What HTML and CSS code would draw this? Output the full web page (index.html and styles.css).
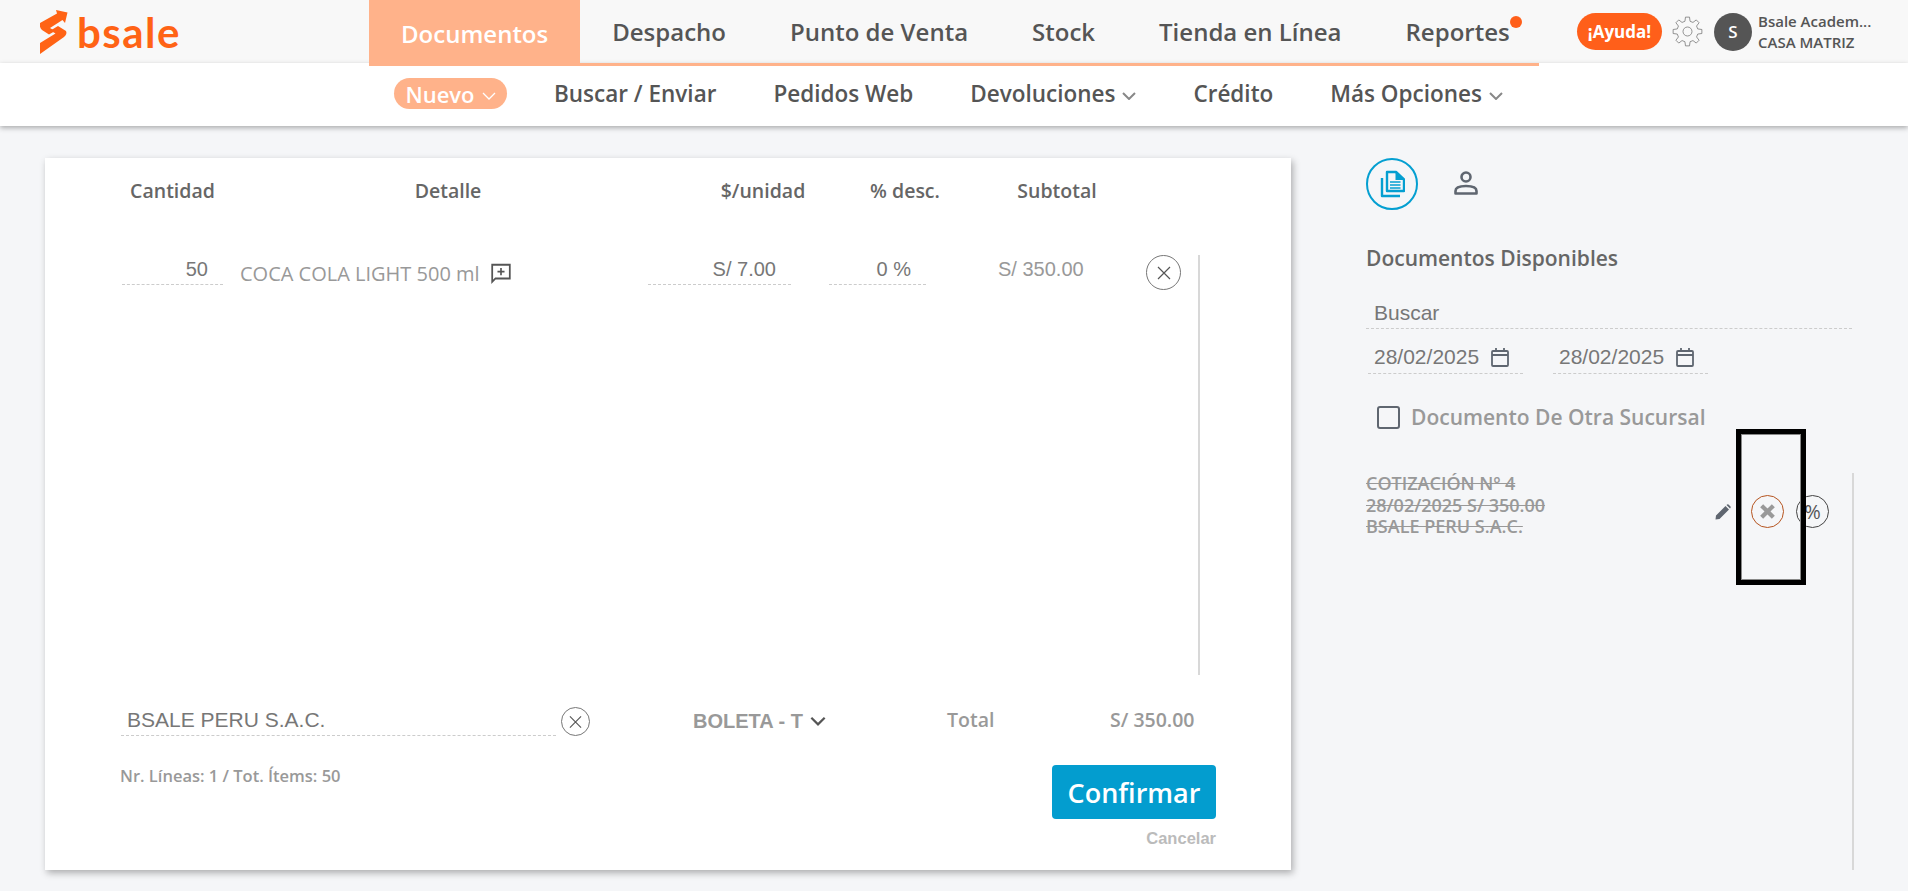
FILE: index.html
```html
<!DOCTYPE html>
<html lang="es">

<head>
    <meta charset="UTF-8">
    <title>Bsale - Documentos</title>
    <link rel="stylesheet" href="styles.css">
</head>

<body>
    <header class="topBar">
        <a class="logo" href="#">
            <svg class="logoMark" viewBox="0 0 28 44" width="28" height="44">
                <path fill="#ff6315" d="M0 13 L17 3.500 L16 0 L27.500 2.500 L25 13 L22.500 10 L10 18 L15 21 L9 24.500 L2 20 Q-1 17 0 13 Z"/>
                <path fill="#ff6315" d="M18 16 L26 21 Q27.500 24 24 27 L0 44 L0 33 L15.500 23.500 L10.500 20.500 Z"/>
            </svg>
            <span class="logoText">bsale</span>
        </a>
        <nav class="mainNav">
            <a class="mainOpt active" href="#">Documentos</a>
            <a class="mainOpt" href="#">Despacho</a>
            <a class="mainOpt" href="#">Punto de Venta</a>
            <a class="mainOpt" href="#">Stock</a>
            <a class="mainOpt" href="#">Tienda en Línea</a>
            <a class="mainOpt dotted" href="#">Reportes</a>
        </nav>
        <div class="tools">
            <button class="helpBtn">¡Ayuda!</button>
            <svg class="gear" viewBox="-12.500 -12.500 25 25" width="33" height="33">
                <polygon fill="none" stroke="#777" stroke-width=".6" points="7.76,-1.94 10.89,-1.53 10.89,1.53 7.76,1.94 6.86,4.12 8.78,6.62 6.62,8.78 4.12,6.86 1.94,7.76 1.53,10.89 -1.53,10.89 -1.94,7.76 -4.12,6.86 -6.62,8.78 -8.78,6.62 -6.86,4.12 -7.76,1.94 -10.89,1.53 -10.89,-1.53 -7.76,-1.94 -6.86,-4.12 -8.78,-6.62 -6.62,-8.78 -4.12,-6.86 -1.94,-7.76 -1.53,-10.89 1.53,-10.89 1.94,-7.76 4.12,-6.86 6.62,-8.78 8.78,-6.62 6.86,-4.12"/>
                <circle r="3.4" fill="none" stroke="#777" stroke-width=".6"/>
            </svg>
            <div class="avatar">S</div>
            <div class="userInfo">
                <div>Bsale Academ...</div>
                <div>CASA MATRIZ</div>
            </div>
        </div>
    </header>

    <div class="subBar">
        <a class="subOpt pill" href="#">Nuevo
            <svg class="chev" viewBox="0 0 14 8" width="14" height="8"><path d="M1 1 L7 7 L13 1" fill="none" stroke="#fff" stroke-width="1.300"/></svg>
        </a>
        <a class="subOpt" href="#">Buscar / Enviar</a>
        <a class="subOpt" href="#">Pedidos Web</a>
        <a class="subOpt" href="#">Devoluciones
            <svg class="chev" viewBox="0 0 14 8" width="14" height="8"><path d="M1 1 L7 7 L13 1" fill="none" stroke="#888" stroke-width="2"/></svg>
        </a>
        <a class="subOpt" href="#">Crédito</a>
        <a class="subOpt" href="#">Más Opciones
            <svg class="chev" viewBox="0 0 14 8" width="14" height="8"><path d="M1 1 L7 7 L13 1" fill="none" stroke="#888" stroke-width="2"/></svg>
        </a>
    </div>

    <div class="mainBody">
        <section class="card">
            <div class="tableHead">
                <span class="headQty">Cantidad</span>
                <span class="headDetail">Detalle</span>
                <span class="headPrice">$/unidad</span>
                <span class="headDisc">% desc.</span>
                <span class="headSub">Subtotal</span>
            </div>

            <div class="items">
                <div class="itemRow">
                    <div class="field qtyField">50</div>
                    <div class="itemName">COCA COLA LIGHT 500 ml
                        <svg class="noteIcon" viewBox="0 0 20 20" width="22" height="22">
                            <path d="M2 2.500 H18 V15 H5 L2 18 Z" fill="none" stroke="#555" stroke-width="1.600"/>
                            <path d="M10 5.500 V12 M6.800 8.800 H13.200" stroke="#555" stroke-width="1.500"/>
                        </svg>
                    </div>
                    <div class="field priceField">S/ 7.00</div>
                    <div class="field discField">0 %</div>
                    <div class="itemSub">S/ 350.00</div>
                    <button class="closeBtn itemClose">
                        <svg viewBox="0 0 14 14" width="14" height="14"><path d="M1 1 L13 13 M13 1 L1 13" stroke="#555" stroke-width="1.200"/></svg>
                    </button>
                </div>
            </div>

            <div class="cardFoot">
                <div class="field clientField">BSALE PERU S.A.C.</div>
                <button class="closeBtn clientClose">
                    <svg viewBox="0 0 14 14" width="14" height="14"><path d="M1 1 L13 13 M13 1 L1 13" stroke="#555" stroke-width="1.200"/></svg>
                </button>
                <div class="docType">BOLETA - T
                    <svg viewBox="0 0 14 9" width="16" height="10"><path d="M1 1.500 L7 7.500 L13 1.500" fill="none" stroke="#555" stroke-width="2"/></svg>
                </div>
                <div class="totalLabel">Total</div>
                <div class="totalValue">S/ 350.00</div>
            </div>

            <div class="cardActions">
                <div class="counts">Nr. Líneas: 1 / Tot. Ítems: 50</div>
                <div class="actionBtns">
                    <button class="confirmBtn">Confirmar</button>
                    <a class="cancelLink" href="#">Cancelar</a>
                </div>
            </div>
        </section>

        <aside class="sidePanel">
            <div class="sideTabs">
                <div class="tabCircle">
                    <svg viewBox="0 0 26 28" width="26" height="28">
                        <path d="M8 2 H17 L25 9.500 V21 H8 Z" fill="none" stroke="#049fd1" stroke-width="2.400" stroke-linejoin="round"/>
                        <path d="M16.500 2 L25 10 H16.500 Z" fill="#049fd1"/>
                        <path d="M11 12 H21.500 M11 15 H21.500 M11 18 H21.500" stroke="#049fd1" stroke-width="1.600"/>
                        <path d="M3 8 V26 H21" fill="none" stroke="#049fd1" stroke-width="2.400" stroke-linejoin="round"/>
                    </svg>
                </div>
                <svg class="personIcon" viewBox="0 0 24 24" width="24" height="24">
                    <circle cx="12" cy="6" r="4.500" fill="none" stroke="#5f6670" stroke-width="2.600"/>
                    <path d="M1.500 20 Q1.500 15 12 15 Q22.500 15 22.500 20 V22.500 H1.500 Z" fill="none" stroke="#5f6670" stroke-width="2.600" stroke-linejoin="round"/>
                </svg>
            </div>

            <h3 class="sideTitle">Documentos Disponibles</h3>

            <div class="field searchField">Buscar</div>

            <div class="dateRow">
                <div class="field dateField">28/02/2025
                    <svg viewBox="0 0 18 20" width="18" height="20"><path d="M2 4 H16 Q17 4 17 5 V18 Q17 19 16 19 H2 Q1 19 1 18 V5 Q1 4 2 4 Z M1 8 H17 M5 1 V4 M13 1 V4" fill="none" stroke="#5f6670" stroke-width="1.800"/></svg>
                </div>
                <div class="field dateField">28/02/2025
                    <svg viewBox="0 0 18 20" width="18" height="20"><path d="M2 4 H16 Q17 4 17 5 V18 Q17 19 16 19 H2 Q1 19 1 18 V5 Q1 4 2 4 Z M1 8 H17 M5 1 V4 M13 1 V4" fill="none" stroke="#5f6670" stroke-width="1.800"/></svg>
                </div>
            </div>

            <label class="otherBranch">
                <span class="checkBox"></span>
                Documento De Otra Sucursal
            </label>

            <div class="docList">
                <div class="docRow">
                    <div class="docText">
                        <div>COTIZACIÓN Nº 4</div>
                        <div>28/02/2025 S/ 350.00</div>
                        <div>BSALE PERU S.A.C.</div>
                    </div>
                    <div class="docActions">
                        <svg class="pencil" viewBox="0 0 16 16" width="16" height="16"><path d="M0.500 15.500 L1 11.500 L10.500 2 L14 5.500 L4.500 15 Z M11.500 1 Q12.500 0 13.500 0.500 L15.500 2.500 Q16 3.500 15 4.500 Z" fill="#5f6670"/></svg>
                        <button class="roundBtn voidBtn">
                            <svg viewBox="0 0 16 16" width="17" height="17"><path d="M2.500 2.500 L13.500 13.500 M13.500 2.500 L2.500 13.500" stroke="#999" stroke-width="4"/></svg>
                        </button>
                        <button class="roundBtn percentBtn">%</button>
                    </div>
                </div>
            </div>
        </aside>
    </div>

    <div class="markBox"></div>
</body>

</html>
```

FILE: styles.css
```css
* {
    margin: 0px;
    padding: 0px;
    box-sizing: border-box;
}

body {
    background-color: #f5f6f8;
    font-family: 'Open Sans', sans-serif;
    height: 891px;
    overflow: hidden;
    position: relative;
}

a {
    text-decoration: none;
    color: inherit;
}

button {
    font-family: inherit;
    cursor: pointer;
}

/* top bar */
.topBar {
    display: flex;
    height: 63px;
    background-color: #f8f8f8;
}

.logo {
    width: 369px;
    padding-left: 40px;
    display: flex;
    align-items: center;
    gap: 9px;
}

.logoMark {
    margin-top: 1px;
}

.logoText {
    font-family: 'Lato', sans-serif;
    font-weight: 700;
    font-size: 42px;
    line-height: 40px;
    letter-spacing: 1.5px;
    color: #ff6315;
}

.mainNav {
    display: flex;
    width: 1170px;
    height: 66px;
    border-bottom: 3px solid #ffb28a;
    position: relative;
    z-index: 1;
}

.mainOpt {
    display: flex;
    align-items: center;
    height: 63px;
    padding: 0px 32px;
    font-size: 24px;
    font-weight: 600;
    color: #555;
    white-space: nowrap;
}

.mainOpt.active {
    height: 66px;
    margin-bottom: -3px;
    background-color: #ffb28a;
    color: #fff;
}

.dotted {
    position: relative;
}

.dotted::after {
    content: "";
    position: absolute;
    top: 16px;
    right: 20px;
    width: 12px;
    height: 12px;
    border-radius: 50%;
    background-color: #ff5f1a;
}

.tools {
    display: flex;
    align-items: center;
    padding-left: 38px;
}

.helpBtn {
    width: 85px;
    height: 37px;
    border: none;
    border-radius: 19px;
    background-color: #ff5f1a;
    color: #fff;
    font-size: 17px;
    font-weight: 700;
}

.gear {
    margin-left: 9px;
}

.avatar {
    width: 38px;
    height: 38px;
    margin-left: 10px;
    border-radius: 50%;
    background-color: #555;
    color: #fff;
    font-size: 17px;
    font-weight: 600;
    line-height: 38px;
    text-align: center;
}

.userInfo {
    margin-left: 6px;
    font-size: 15px;
    font-weight: 600;
    line-height: 21px;
    color: #555;
    white-space: nowrap;
}

/* second bar */
.subBar {
    display: flex;
    align-items: center;
    height: 63px;
    padding-left: 394px;
    background-color: #fff;
    box-shadow: 0px 2px 5px rgba(0, 0, 0, .3);
    position: relative;
}

.subOpt {
    display: flex;
    align-items: center;
    gap: 7px;
    margin-top: -2px;
    margin-right: 57px;
    font-size: 22.500px;
    font-weight: 600;
    color: #555;
    white-space: nowrap;
}

.subOpt .chev {
    margin-top: 5px;
}

.pill {
    width: 113px;
    height: 31px;
    justify-content: center;
    margin-top: -2px;
    margin-right: 47px;
    border-radius: 16px;
    background-color: #ffb28a;
    font-size: 22px;
    color: #fff;
}

/* main */
.mainBody {
    display: flex;
    padding: 32px 0px 0px 45px;
}

.card {
    width: 1246px;
    height: 712px;
    padding-top: 20px;
    background-color: #fff;
    box-shadow: 2px 3px 7px rgba(0, 0, 0, .3);
}

.tableHead {
    display: flex;
    height: 26px;
    margin-left: 77px;
    margin-bottom: 51px;
    font-size: 19.500px;
    font-weight: 600;
    line-height: 26px;
    color: #666;
    text-align: center;
    white-space: nowrap;
}

.headQty {
    width: 101px;
}

.headDetail {
    width: 450px;
}

.headPrice {
    width: 180px;
}

.headDisc {
    width: 104px;
}

.headSub {
    width: 200px;
}

.items {
    width: 1078px;
    height: 420px;
    margin-left: 77px;
    border-right: 2px solid #d8d8d8;
}

.itemRow {
    display: flex;
    align-items: flex-start;
    height: 36px;
}

.field {
    border-bottom: 1px dashed #ccc;
    font-family: 'Liberation Sans', sans-serif;
    font-size: 20px;
    color: #777;
}

.qtyField {
    width: 101px;
    height: 30px;
    padding-right: 15px;
    text-align: right;
    line-height: 28px;
}

.itemName {
    display: flex;
    align-items: center;
    width: 408px;
    height: 36px;
    margin-left: 17px;
    gap: 10px;
    font-size: 20px;
    font-weight: 500;
    color: #999;
    white-space: nowrap;
}

.priceField {
    width: 143px;
    height: 30px;
    padding-right: 15px;
    text-align: right;
    line-height: 28px;
}

.discField {
    width: 97px;
    height: 30px;
    margin-left: 38px;
    padding-right: 15px;
    text-align: right;
    line-height: 28px;
}

.itemSub {
    width: 85px;
    margin-left: 72px;
    font-family: 'Liberation Sans', sans-serif;
    font-size: 20px;
    line-height: 28px;
    color: #999;
    white-space: nowrap;
}

.closeBtn {
    display: flex;
    align-items: center;
    justify-content: center;
    border: 1px solid #777;
    border-radius: 50%;
    background-color: #fff;
}

.itemClose {
    width: 35px;
    height: 35px;
    margin-left: 63px;
}

.cardFoot {
    display: flex;
    align-items: flex-start;
    height: 29px;
    margin: 32px 0px 0px 76px;
}

.clientField {
    width: 435px;
    height: 29px;
    padding-left: 6px;
    font-size: 21px;
    line-height: 26px;
}

.clientClose {
    width: 29px;
    height: 29px;
    margin-left: 5px;
}

.clientClose svg {
    width: 13px;
}

.docType {
    display: flex;
    align-items: center;
    gap: 7px;
    width: 254px;
    margin-left: 103px;
    font-family: 'Liberation Sans', sans-serif;
    font-size: 20px;
    font-weight: 700;
    line-height: 28px;
    color: #999;
}

.totalLabel {
    width: 163px;
    font-size: 19.500px;
    font-weight: 600;
    line-height: 26px;
    color: #999;
}

.totalValue {
    font-size: 19.500px;
    font-weight: 600;
    line-height: 26px;
    color: #999;
    white-space: nowrap;
}

.cardActions {
    display: flex;
    justify-content: space-between;
    align-items: flex-start;
    width: 1096px;
    margin: 29px 0px 0px 75px;
}

.counts {
    margin-top: 1px;
    font-size: 16.500px;
    font-weight: 600;
    line-height: 20px;
    color: #999;
}

.actionBtns {
    display: flex;
    flex-direction: column;
    align-items: flex-end;
}

.confirmBtn {
    width: 164px;
    height: 54px;
    border: none;
    border-radius: 4px;
    background-color: #039dcf;
    color: #fff;
    font-size: 27px;
    font-weight: 600;
}

.cancelLink {
    margin-top: 10px;
    font-family: 'Liberation Sans', sans-serif;
    font-size: 16.500px;
    font-weight: 700;
    line-height: 18px;
    color: #bbb;
}

/* right side */
.sidePanel {
    width: 488px;
    margin-left: 75px;
}

.sideTabs {
    display: flex;
    align-items: center;
    gap: 36px;
    height: 52px;
}

.tabCircle {
    display: flex;
    align-items: center;
    justify-content: center;
    width: 52px;
    height: 52px;
    border: 2px solid #049fd1;
    border-radius: 50%;
}

.personIcon {
    margin-top: -2px;
}

.sideTitle {
    margin-top: 34px;
    font-size: 21px;
    font-weight: 600;
    line-height: 28px;
    color: #666;
}

.searchField {
    width: 486px;
    height: 32px;
    margin: 25px 0px 0px 0px;
    padding-left: 8px;
    font-size: 21px;
    line-height: 31px;
}

.dateRow {
    display: flex;
    gap: 30px;
    margin: 12px 0px 0px 2px;
}

.dateField {
    display: flex;
    align-items: center;
    gap: 12px;
    width: 155px;
    height: 33px;
    padding-left: 6px;
    font-size: 21px;
    white-space: nowrap;
}

.otherBranch {
    display: flex;
    align-items: center;
    gap: 11px;
    height: 28px;
    margin: 29px 0px 0px 11px;
    font-size: 21px;
    font-weight: 600;
    color: #999;
    white-space: nowrap;
}

.checkBox {
    width: 23px;
    height: 23px;
    border: 2px solid #5f6670;
    border-radius: 3px;
}

.docList {
    height: 397px;
    margin-top: 42px;
    border-right: 2px solid #d8d8d8;
}

.docRow {
    display: flex;
    justify-content: space-between;
    width: 463px;
}

.docText {
    font-size: 18px;
    font-weight: 600;
    line-height: 21.500px;
    color: #999;
    text-decoration: line-through;
    white-space: nowrap;
}

.docActions {
    display: flex;
    align-items: center;
    margin-top: 22px;
    height: 33px;
}

.pencil {
    margin-right: 20px;
}

.roundBtn {
    display: flex;
    align-items: center;
    justify-content: center;
    width: 33px;
    height: 33px;
    border-radius: 50%;
    background-color: transparent;
}

.voidBtn {
    border: 1px solid #b5541f;
    margin-right: 12px;
}

.percentBtn {
    border: 1px solid #444;
    font-size: 20px;
    font-weight: 500;
    color: #555;
}

/* black frame over the list */
.markBox {
    position: absolute;
    left: 1736px;
    top: 429px;
    width: 70px;
    height: 156px;
    border: 5px solid #000;
    outline: 1px solid #888;
    outline-offset: -6px;
}
```
